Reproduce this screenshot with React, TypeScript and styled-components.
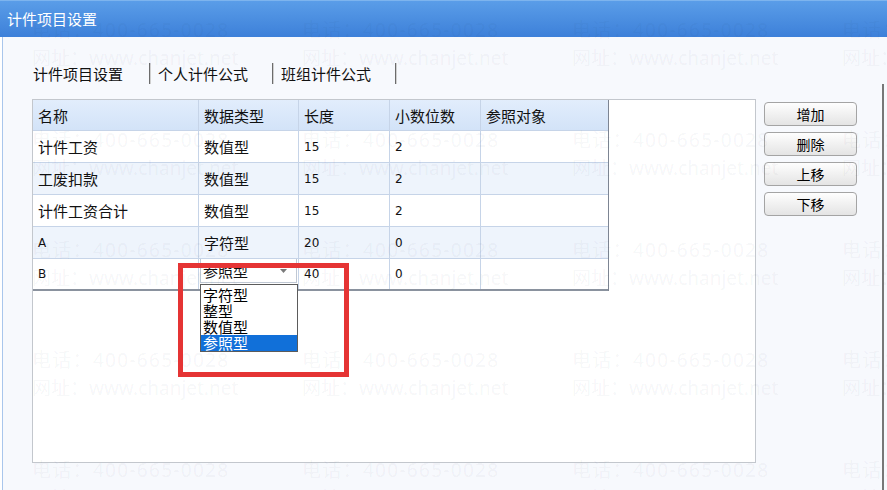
import React, { FunctionComponent } from 'react';
import styled, { createGlobalStyle } from 'styled-components';

const cjk = `"Noto Sans CJK SC", "Noto Sans", sans-serif`;

const GlobalStyle = createGlobalStyle`
    html, body {
        margin: 0;
        padding: 0;
        background: #fff;
        overflow: hidden;
    }
    body {
        font-family: ${cjk};
    }
`;

const Window = styled.div`
    position: relative;
    width: 887px;
    height: 490px;
    display: flex;
    flex-direction: column;
    background: #fff;
    overflow: hidden;
`;

const TitleBar = styled.div`
    flex: none;
    height: 37px;
    box-sizing: border-box;
    display: flex;
    align-items: center;
    padding-left: 7px;
    border-top: 1px solid #7db4ee;
    background: linear-gradient(#5a9de8, #3d80d9);
    color: #fff;
    font-size: 15px;
    line-height: 20px;
`;

const Body = styled.div`
    flex: 1;
    display: flex;
    flex-direction: column;
    margin-left: 2px;
    border-left: 1px solid #a9c6ec;
    background: #f7f9fd;
`;

const TabStrip = styled.div`
    flex: none;
    height: 47px;
    box-sizing: border-box;
    display: flex;
    align-items: flex-end;
    padding-left: 30px;
`;

const Tab = styled.div<{ $active?: boolean }>`
    height: 21px;
    line-height: 21px;
    font-size: 15px;
    color: #111;
    white-space: nowrap;
    padding: ${(p) => (p.$active ? '0 26px 0 0' : '0 24px 0 7px')};
`;

const TabDivider = styled.div`
    width: 2px;
    height: 21px;
    background: linear-gradient(to right, #6c6c6c 50%, #d0d0d0 50%);
`;

const Main = styled.div`
    flex: 1;
    display: flex;
    align-items: flex-start;
    gap: 8px;
    padding: 15px 0 0 29px;
    margin-right: 3px;
    border-right: 2px solid #777;
`;

const Panel = styled.div`
    flex: none;
    width: 724px;
    height: 364px;
    box-sizing: border-box;
    border: 1px solid #c3c7cd;
    background: #fff;
`;

const Table = styled.div`
    width: 575px;
    border-right: 1px solid #7d8593;
`;

const Row = styled.div<{ $head?: boolean; $alt?: boolean }>`
    display: grid;
    grid-template-columns: 166px 100px 91px 91px 126px;
    height: ${(p) => (p.$head ? '31px' : '32px')};
    box-sizing: border-box;
    border-bottom: 1px solid #c6d4e8;
    background: ${(p) => (p.$head ? 'linear-gradient(#e2edfc, #d3e3f8)' : p.$alt ? '#eef4fc' : '#fff')};
    &:last-child {
        border-bottom: 2px solid #8a929e;
    }
`;

const Cell = styled.div<{ $latin?: boolean; $top?: boolean }>`
    display: flex;
    align-items: ${(p) => (p.$top ? 'flex-start' : 'center')};
    padding-left: ${(p) => (p.$top ? '1px' : '5px')};
    border-right: 1px solid #c6d4e8;
    color: #111;
    white-space: nowrap;
    font-family: ${(p) => (p.$latin ? '"DejaVu Sans", sans-serif' : cjk)};
    font-size: ${(p) => (p.$latin ? '12px' : '15px')};
    &:last-child {
        border-right: none;
    }
`;

const Combo = styled.div`
    position: relative;
    width: 97px;
    height: 24px;
    box-sizing: border-box;
    display: flex;
    align-items: center;
    justify-content: space-between;
    padding: 0 9px 0 2px;
    border: 1px solid #c0c8d4;
    border-top: none;
    background: #fff;
    font-size: 15px;
    line-height: 24px;
`;

const DropList = styled.div`
    position: absolute;
    top: 25px;
    left: -1px;
    z-index: 20;
    width: 98px;
    box-sizing: border-box;
    padding-top: 2px;
    border: 1px solid #5b5b5b;
    background: #fff;
`;

const DropItem = styled.div<{ $selected?: boolean }>`
    height: 16px;
    line-height: 16px;
    padding-left: 2px;
    font-size: 15px;
    color: ${(p) => (p.$selected ? '#fff' : '#000')};
    background: ${(p) => (p.$selected ? '#1170d9' : 'transparent')};
`;

const ButtonColumn = styled.div`
    display: flex;
    flex-direction: column;
    gap: 6px;
    padding-top: 3px;
`;

const Button = styled.button`
    width: 93px;
    height: 24px;
    padding: 0;
    box-sizing: border-box;
    border: 1px solid #a4a4a4;
    border-radius: 4px;
    background: linear-gradient(#fefefe, #e4e4e4);
    font-family: ${cjk};
    font-size: 14px;
    line-height: 22px;
    color: #000;
`;

const Watermark = styled.div`
    position: absolute;
    inset: 0;
    z-index: 15;
    pointer-events: none;
    display: grid;
    grid-template-columns: repeat(4, 270px);
    grid-auto-rows: 110px;
    padding: 16px 0 0 32px;
    overflow: hidden;
`;

const MarkTile = styled.div`
    display: flex;
    flex-direction: column;
`;

const MarkLine = styled.span<{ $spacing: number }>`
    height: 28px;
    line-height: 28px;
    font-family: "Noto Sans", "Noto Sans CJK SC", sans-serif;
    font-size: 19px;
    letter-spacing: ${(p) => p.$spacing}px;
    white-space: nowrap;
    color: rgba(30, 45, 80, 0.05);
`;

const Highlight = styled.div`
    position: absolute;
    left: 178px;
    top: 263px;
    width: 171px;
    height: 114px;
    box-sizing: border-box;
    border: 5px solid #e53434;
    z-index: 30;
    pointer-events: none;
`;

const ComboArrow: FunctionComponent = () => (
    <svg width="7" height="4" viewBox="0 0 7 4">
        <path d="M0 0 L7 0 L3.5 4 Z" fill="#7a7a7a" />
    </svg>
);

const columns = ['名称', '数据类型', '长度', '小数位数', '参照对象'];

interface Item {
    name: string;
    type: string;
    length: string;
    decimals: string;
    editing?: boolean;
}

const items: Item[] = [
    { name: '计件工资', type: '数值型', length: '15', decimals: '2' },
    { name: '工废扣款', type: '数值型', length: '15', decimals: '2' },
    { name: '计件工资合计', type: '数值型', length: '15', decimals: '2' },
    { name: 'A', type: '字符型', length: '20', decimals: '0' },
    { name: 'B', type: '参照型', length: '40', decimals: '0', editing: true },
];

const typeOptions = ['字符型', '整型', '数值型', '参照型'];

const isLatin = (text: string) => /^[\x00-\x7f]*$/.test(text);

const TypeCell: FunctionComponent<{ item: Item }> = ({ item }) => {
    if (!item.editing) {
        return <Cell>{item.type}</Cell>;
    }
    return (
        <Cell $top>
            <Combo>
                <span>{item.type}</span>
                <ComboArrow />
                <DropList>
                    {typeOptions.map((option) => (
                        <DropItem key={option} $selected={option === item.type}>
                            {option}
                        </DropItem>
                    ))}
                </DropList>
            </Combo>
        </Cell>
    );
};

const App: FunctionComponent = () => (
    <>
        <GlobalStyle />
        <Window>
            <TitleBar>计件项目设置</TitleBar>
            <Body>
                <TabStrip>
                    <Tab $active>计件项目设置</Tab>
                    <TabDivider />
                    <Tab>个人计件公式</Tab>
                    <TabDivider />
                    <Tab>班组计件公式</Tab>
                    <TabDivider />
                </TabStrip>
                <Main>
                    <Panel>
                        <Table>
                            <Row $head>
                                {columns.map((c) => (
                                    <Cell key={c}>{c}</Cell>
                                ))}
                            </Row>
                            {items.map((item, i) => (
                                <Row key={item.name} $alt={i % 2 === 1}>
                                    <Cell $latin={isLatin(item.name)}>{item.name}</Cell>
                                    <TypeCell item={item} />
                                    <Cell $latin>{item.length}</Cell>
                                    <Cell $latin>{item.decimals}</Cell>
                                    <Cell />
                                </Row>
                            ))}
                        </Table>
                    </Panel>
                    <ButtonColumn>
                        <Button>增加</Button>
                        <Button>删除</Button>
                        <Button>上移</Button>
                        <Button>下移</Button>
                    </ButtonColumn>
                </Main>
            </Body>
            <Watermark>
                {Array.from({ length: 20 }).map((_, i) => (
                    <MarkTile key={i}>
                        <MarkLine $spacing={1.3}>电话：400-665-0028</MarkLine>
                        <MarkLine $spacing={0}>网址：www.chanjet.net</MarkLine>
                    </MarkTile>
                ))}
            </Watermark>
            <Highlight />
        </Window>
    </>
);

export default App;
